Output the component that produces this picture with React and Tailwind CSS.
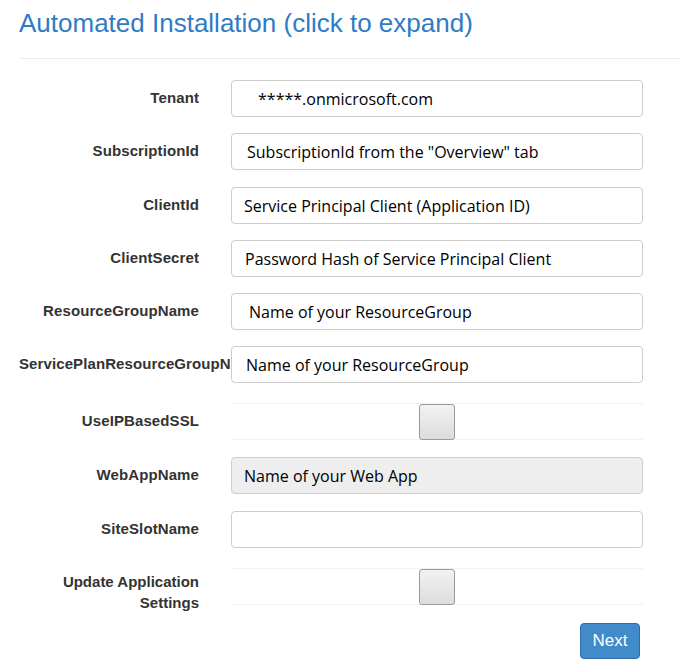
import React from 'react';

const fields = [
  { label: 'Tenant', value: '*****.onmicrosoft.com', pad: 'pl-[26px]', mt: 'mt-[21px]' },
  { label: 'SubscriptionId', value: 'SubscriptionId from the "Overview" tab', pad: 'pl-[15px]', mt: 'mt-[16px]' },
  { label: 'ClientId', value: 'Service Principal Client (Application ID)', pad: 'pl-[12px]', mt: 'mt-[17px]' },
  { label: 'ClientSecret', value: 'Password Hash of Service Principal Client', pad: 'pl-[13px]', mt: 'mt-[16px]' },
  { label: 'ResourceGroupName', value: 'Name of your ResourceGroup', pad: 'pl-[17px]', mt: 'mt-[16px]' },
  { label: 'ServicePlanResourceGroupName', value: 'Name of your ResourceGroup', pad: 'pl-[14px]', mt: 'mt-[16px]' },
];

function Label({ children }) {
  return (
    <div className="w-[212px] shrink-0 overflow-hidden whitespace-nowrap pr-[32px] text-right text-[15px] font-bold tracking-[0.1px] text-[#333]">
      {children}
    </div>
  );
}

function TextBox({ value, pad, disabled }) {
  return (
    <div
      className={`flex h-[37px] w-[412px] items-center rounded-[4px] border border-[#ccc] text-[16px] text-black ${pad} ${
        disabled ? 'bg-[#eee]' : 'bg-white'
      }`}
      style={{ fontFamily: '"Open Sans", sans-serif' }}
    >
      {value}
    </div>
  );
}

function CheckBox() {
  return (
    <div className="flex h-[37px] w-[412px] items-center justify-center border-y border-[#f2f2f2]">
      <div className="h-[36px] w-[36px] rounded-[3px] border border-[#9a9a9a] bg-gradient-to-b from-[#f2f2f2] to-[#dcdcdc]" />
    </div>
  );
}

export default function App() {
  return (
    <div className="min-h-[672px] bg-white pl-[19px]" style={{ fontFamily: '"Liberation Sans", Arial, sans-serif' }}>
      <h2 className="pt-[7px] text-[26px] leading-[32px] text-[#2f7bc4]">
        Automated Installation (click to expand)
      </h2>
      <div className="mt-[19px] border-t border-[#eee]" />

      {fields.map((f) => (
        <div key={f.label} className={`flex items-center ${f.mt}`}>
          <Label>{f.label}</Label>
          <TextBox value={f.value} pad={f.pad} />
        </div>
      ))}

      <div className="mt-[20px] flex items-center">
        <Label>UseIPBasedSSL</Label>
        <CheckBox />
      </div>

      <div className="mt-[17px] flex items-center">
        <Label>WebAppName</Label>
        <TextBox value="Name of your Web App" pad="pl-[12px]" disabled />
      </div>

      <div className="mt-[17px] flex items-center">
        <Label>SiteSlotName</Label>
        <TextBox value="" pad="pl-[12px]" />
      </div>

      <div className="mt-[20px] flex h-[37px] items-start">
        <div className="mt-[3px] w-[212px] shrink-0 pr-[32px] text-right text-[15px] font-bold leading-[21px] text-[#333]">
          Update Application
          <br />
          Settings
        </div>
        <CheckBox />
      </div>

      <div className="mt-[18px] flex w-[621px] justify-end">
        <button className="h-[36px] w-[60px] rounded-[4px] border border-[#2d6da8] bg-[#428bca] text-[17px] text-white">
          Next
        </button>
      </div>
    </div>
  );
}
